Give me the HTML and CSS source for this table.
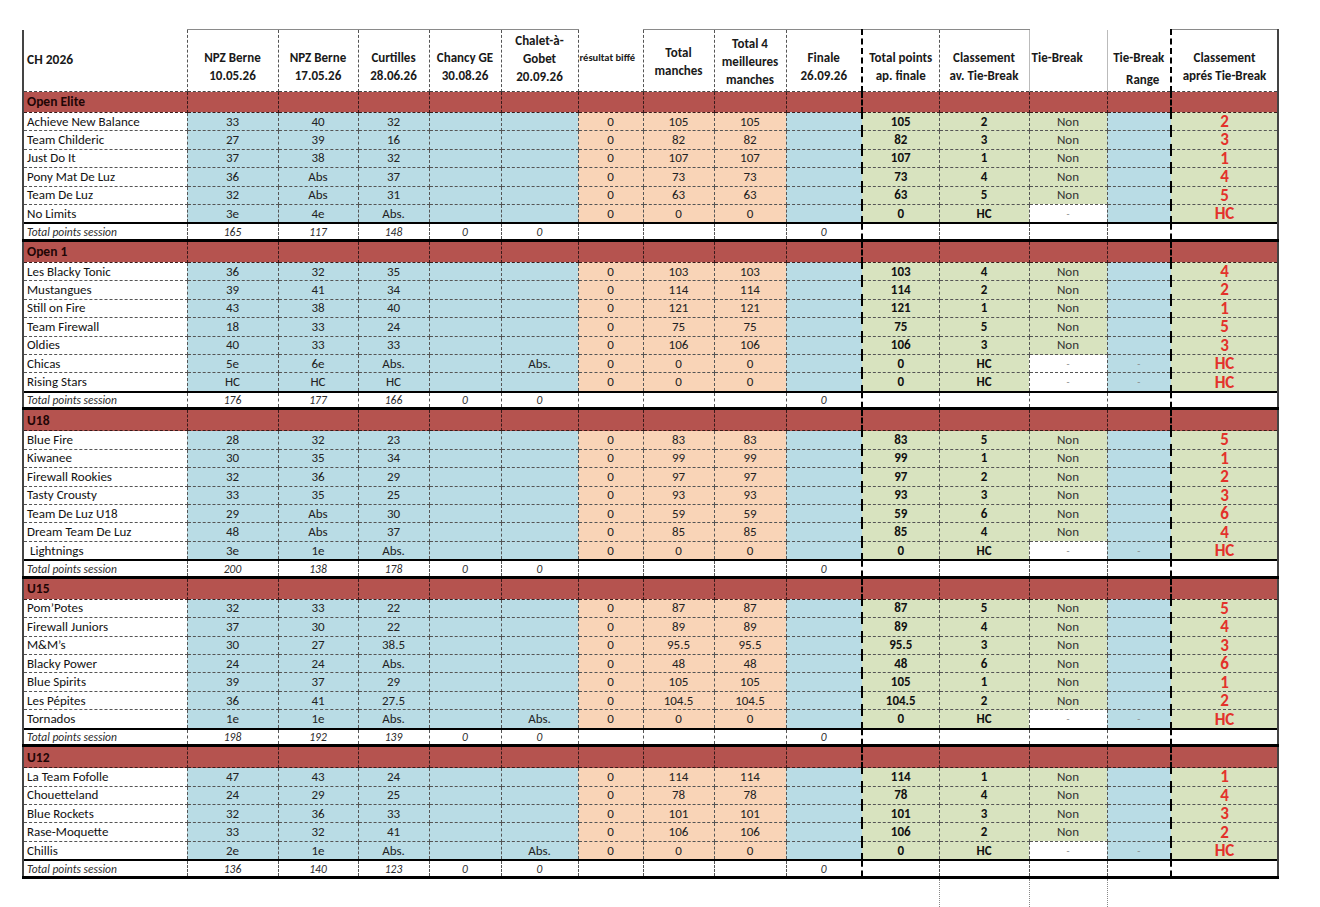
FILE: index.html
```html
<!DOCTYPE html>
<html lang="fr">
<head>
<meta charset="utf-8">
<title>CH 2026</title>
<link rel="stylesheet" href="styles.css">
</head>
<body>
<table class="sheet">
<colgroup>
<col class="c-name"><col class="c-npz1"><col class="c-npz2"><col class="c-cur"><col class="c-cha"><col class="c-chg"><col class="c-bif"><col class="c-tm"><col class="c-t4"><col class="c-fin"><col class="c-tp"><col class="c-cav"><col class="c-tb"><col class="c-tbr"><col class="c-cap">
</colgroup>
<thead>
<tr class="head">
<th class="h-title">CH 2026</th>
<th class="h-low">NPZ Berne<br>10.05.26</th>
<th class="h-low">NPZ Berne<br>17.05.26</th>
<th class="h-low">Curtilles<br>28.06.26</th>
<th class="h-low">Chancy GE<br>30.08.26</th>
<th class="h-three">Chalet-à-<br>Gobet<br>20.09.26</th>
<th class="h-bif">résultat biffé</th>
<th class="h-mid">Total<br>manches</th>
<th class="h-three2">Total 4<br>meilleures<br>manches</th>
<th class="h-low">Finale<br>26.09.26</th>
<th class="h-low">Total points<br>ap. finale</th>
<th class="h-low">Classement<br>av. Tie-Break</th>
<th class="h-tb">Tie-Break</th>
<th class="h-tbr">Tie-Break<br><span class="range">Range</span></th>
<th class="h-low">Classement<br>aprés Tie-Break</th>
</tr>
</thead>
<tbody>
<tr class="sec"><td>Open Elite</td><td></td><td></td><td></td><td></td><td></td><td></td><td></td><td></td><td></td><td></td><td></td><td></td><td></td><td></td></tr>
<tr><td>Achieve New Balance</td><td>33</td><td>40</td><td>32</td><td></td><td></td><td>0</td><td>105</td><td>105</td><td></td><td>105</td><td>2</td><td>Non</td><td></td><td>2</td></tr>
<tr><td>Team Childeric</td><td>27</td><td>39</td><td>16</td><td></td><td></td><td>0</td><td>82</td><td>82</td><td></td><td>82</td><td>3</td><td>Non</td><td></td><td>3</td></tr>
<tr><td>Just Do It</td><td>37</td><td>38</td><td>32</td><td></td><td></td><td>0</td><td>107</td><td>107</td><td></td><td>107</td><td>1</td><td>Non</td><td></td><td>1</td></tr>
<tr><td>Pony Mat De Luz</td><td>36</td><td>Abs</td><td>37</td><td></td><td></td><td>0</td><td>73</td><td>73</td><td></td><td>73</td><td>4</td><td>Non</td><td></td><td>4</td></tr>
<tr><td>Team De Luz</td><td>32</td><td>Abs</td><td>31</td><td></td><td></td><td>0</td><td>63</td><td>63</td><td></td><td>63</td><td>5</td><td>Non</td><td></td><td>5</td></tr>
<tr class="out"><td>No Limits</td><td>3e</td><td>4e</td><td>Abs.</td><td></td><td></td><td>0</td><td>0</td><td>0</td><td></td><td>0</td><td>HC</td><td class="w">-</td><td></td><td>HC</td></tr>
<tr class="tot"><td>Total points session</td><td>165</td><td>117</td><td>148</td><td>0</td><td>0</td><td></td><td></td><td></td><td>0</td><td></td><td></td><td></td><td></td><td></td></tr>

<tr class="sec"><td>Open 1</td><td></td><td></td><td></td><td></td><td></td><td></td><td></td><td></td><td></td><td></td><td></td><td></td><td></td><td></td></tr>
<tr><td>Les Blacky Tonic</td><td>36</td><td>32</td><td>35</td><td></td><td></td><td>0</td><td>103</td><td>103</td><td></td><td>103</td><td>4</td><td>Non</td><td></td><td>4</td></tr>
<tr><td>Mustangues</td><td>39</td><td>41</td><td>34</td><td></td><td></td><td>0</td><td>114</td><td>114</td><td></td><td>114</td><td>2</td><td>Non</td><td></td><td>2</td></tr>
<tr><td>Still on Fire</td><td>43</td><td>38</td><td>40</td><td></td><td></td><td>0</td><td>121</td><td>121</td><td></td><td>121</td><td>1</td><td>Non</td><td></td><td>1</td></tr>
<tr><td>Team Firewall</td><td>18</td><td>33</td><td>24</td><td></td><td></td><td>0</td><td>75</td><td>75</td><td></td><td>75</td><td>5</td><td>Non</td><td></td><td>5</td></tr>
<tr><td>Oldies</td><td>40</td><td>33</td><td>33</td><td></td><td></td><td>0</td><td>106</td><td>106</td><td></td><td>106</td><td>3</td><td>Non</td><td></td><td>3</td></tr>
<tr class="out"><td>Chicas</td><td>5e</td><td>6e</td><td>Abs.</td><td></td><td>Abs.</td><td>0</td><td>0</td><td>0</td><td></td><td>0</td><td>HC</td><td class="w">-</td><td class="dash">-</td><td>HC</td></tr>
<tr class="out"><td>Rising Stars</td><td>HC</td><td>HC</td><td>HC</td><td></td><td></td><td>0</td><td>0</td><td>0</td><td></td><td>0</td><td>HC</td><td class="w">-</td><td class="dash">-</td><td>HC</td></tr>
<tr class="tot"><td>Total points session</td><td>176</td><td>177</td><td>166</td><td>0</td><td>0</td><td></td><td></td><td></td><td>0</td><td></td><td></td><td></td><td></td><td></td></tr>

<tr class="sec"><td>U18</td><td></td><td></td><td></td><td></td><td></td><td></td><td></td><td></td><td></td><td></td><td></td><td></td><td></td><td></td></tr>
<tr><td>Blue Fire</td><td>28</td><td>32</td><td>23</td><td></td><td></td><td>0</td><td>83</td><td>83</td><td></td><td>83</td><td>5</td><td>Non</td><td></td><td>5</td></tr>
<tr><td>Kiwanee</td><td>30</td><td>35</td><td>34</td><td></td><td></td><td>0</td><td>99</td><td>99</td><td></td><td>99</td><td>1</td><td>Non</td><td></td><td>1</td></tr>
<tr><td>Firewall Rookies</td><td>32</td><td>36</td><td>29</td><td></td><td></td><td>0</td><td>97</td><td>97</td><td></td><td>97</td><td>2</td><td>Non</td><td></td><td>2</td></tr>
<tr><td>Tasty Crousty</td><td>33</td><td>35</td><td>25</td><td></td><td></td><td>0</td><td>93</td><td>93</td><td></td><td>93</td><td>3</td><td>Non</td><td></td><td>3</td></tr>
<tr><td>Team De Luz U18</td><td>29</td><td>Abs</td><td>30</td><td></td><td></td><td>0</td><td>59</td><td>59</td><td></td><td>59</td><td>6</td><td>Non</td><td></td><td>6</td></tr>
<tr><td>Dream Team De Luz</td><td>48</td><td>Abs</td><td>37</td><td></td><td></td><td>0</td><td>85</td><td>85</td><td></td><td>85</td><td>4</td><td>Non</td><td></td><td>4</td></tr>
<tr class="out"><td class="ind">Lightnings</td><td>3e</td><td>1e</td><td>Abs.</td><td></td><td></td><td>0</td><td>0</td><td>0</td><td></td><td>0</td><td>HC</td><td class="w">-</td><td class="dash">-</td><td>HC</td></tr>
<tr class="tot"><td>Total points session</td><td>200</td><td>138</td><td>178</td><td>0</td><td>0</td><td></td><td></td><td></td><td>0</td><td></td><td></td><td></td><td></td><td></td></tr>

<tr class="sec"><td>U15</td><td></td><td></td><td></td><td></td><td></td><td></td><td></td><td></td><td></td><td></td><td></td><td></td><td></td><td></td></tr>
<tr><td>Pom’Potes</td><td>32</td><td>33</td><td>22</td><td></td><td></td><td>0</td><td>87</td><td>87</td><td></td><td>87</td><td>5</td><td>Non</td><td></td><td>5</td></tr>
<tr><td>Firewall Juniors</td><td>37</td><td>30</td><td>22</td><td></td><td></td><td>0</td><td>89</td><td>89</td><td></td><td>89</td><td>4</td><td>Non</td><td></td><td>4</td></tr>
<tr><td>M&amp;M’s</td><td>30</td><td>27</td><td>38.5</td><td></td><td></td><td>0</td><td>95.5</td><td>95.5</td><td></td><td>95.5</td><td>3</td><td>Non</td><td></td><td>3</td></tr>
<tr><td>Blacky Power</td><td>24</td><td>24</td><td>Abs.</td><td></td><td></td><td>0</td><td>48</td><td>48</td><td></td><td>48</td><td>6</td><td>Non</td><td></td><td>6</td></tr>
<tr><td>Blue Spirits</td><td>39</td><td>37</td><td>29</td><td></td><td></td><td>0</td><td>105</td><td>105</td><td></td><td>105</td><td>1</td><td>Non</td><td></td><td>1</td></tr>
<tr><td>Les Pépites</td><td>36</td><td>41</td><td>27.5</td><td></td><td></td><td>0</td><td>104.5</td><td>104.5</td><td></td><td>104.5</td><td>2</td><td>Non</td><td></td><td>2</td></tr>
<tr class="out"><td>Tornados</td><td>1e</td><td>1e</td><td>Abs.</td><td></td><td>Abs.</td><td>0</td><td>0</td><td>0</td><td></td><td>0</td><td>HC</td><td class="w">-</td><td class="dash">-</td><td>HC</td></tr>
<tr class="tot"><td>Total points session</td><td>198</td><td>192</td><td>139</td><td>0</td><td>0</td><td></td><td></td><td></td><td>0</td><td></td><td></td><td></td><td></td><td></td></tr>

<tr class="sec"><td>U12</td><td></td><td></td><td></td><td></td><td></td><td></td><td></td><td></td><td></td><td></td><td></td><td></td><td></td><td></td></tr>
<tr><td>La Team Fofolle</td><td>47</td><td>43</td><td>24</td><td></td><td></td><td>0</td><td>114</td><td>114</td><td></td><td>114</td><td>1</td><td>Non</td><td></td><td>1</td></tr>
<tr><td>Chouetteland</td><td>24</td><td>29</td><td>25</td><td></td><td></td><td>0</td><td>78</td><td>78</td><td></td><td>78</td><td>4</td><td>Non</td><td></td><td>4</td></tr>
<tr><td>Blue Rockets</td><td>32</td><td>36</td><td>33</td><td></td><td></td><td>0</td><td>101</td><td>101</td><td></td><td>101</td><td>3</td><td>Non</td><td></td><td>3</td></tr>
<tr><td>Rase-Moquette</td><td>33</td><td>32</td><td>41</td><td></td><td></td><td>0</td><td>106</td><td>106</td><td></td><td>106</td><td>2</td><td>Non</td><td></td><td>2</td></tr>
<tr class="out"><td>Chillis</td><td>2e</td><td>1e</td><td>Abs.</td><td></td><td>Abs.</td><td>0</td><td>0</td><td>0</td><td></td><td>0</td><td>HC</td><td class="w">-</td><td class="dash">-</td><td>HC</td></tr>
<tr class="tot"><td>Total points session</td><td>136</td><td>140</td><td>123</td><td>0</td><td>0</td><td></td><td></td><td></td><td>0</td><td></td><td></td><td></td><td></td><td></td></tr>
<tr class="tail"><td></td><td></td><td></td><td></td><td></td><td></td><td></td><td></td><td></td><td></td><td></td><td></td><td></td><td></td><td></td></tr>
</tbody>
</table>
</body>
</html>
```
FILE: styles.css
```css
html, body {
  margin: 0;
  padding: 0;
  background: #ffffff;
}
body {
  font-family: "Carlito", "Liberation Sans Narrow", "Open Sans", sans-serif;
  color: #1c1c1c;
  overflow: hidden;
}
.sheet {
  border-collapse: collapse;
  table-layout: fixed;
  width: 1256px;
  margin: 29px 0 0 22px;
}
.c-name { width: 164px; }
.c-npz1 { width: 91px; }
.c-npz2 { width: 80px; }
.c-cur { width: 71px; }
.c-cha { width: 72px; }
.c-chg { width: 77px; }
.c-bif { width: 65px; }
.c-tm { width: 71px; }
.c-t4 { width: 72px; }
.c-fin { width: 76px; }
.c-tp { width: 77px; }
.c-cav { width: 90px; }
.c-tb { width: 78px; }
.c-tbr { width: 64px; }
.c-cap { width: 107px; }

/* ---------- header ---------- */
.head { height: 62px; }
.head th {
  padding: 0;
  font-size: 13px;
  font-weight: bold;
  line-height: 18px;
  text-align: center;
  vertical-align: middle;
  background: #fff;
  color: #1a1a1a;
  border-top: 1px solid #8a8a8a;
  border-right: 1px dashed #555;
  border-bottom: 1px dashed #444;
  white-space: nowrap;
}
.head th.h-title {
  text-align: left;
  padding-left: 3px;
  border-top: none;
  border-left: 2px solid #444;
  font-size: 13.5px;
}
.head th.h-low { padding-top: 12px; }
.head th.h-three { padding-bottom: 4px; }
.head th.h-three2 { padding-top: 2px; }
.head th.h-mid { padding-top: 2px; }
.head th.h-bif {
  border-top: none;
  font-size: 10.5px;
  text-align: left;
  vertical-align: top;
  padding: 22px 0 0 1px;
  line-height: 12px;
}
.head th.h-tb {
  border-top: none;
  text-align: left;
  vertical-align: top;
  padding: 19px 0 0 2px;
  border-left: 1px solid #bbb;
  border-right: 1px solid #bbb;
}
.head th.h-tbr {
  border-top: none;
  vertical-align: top;
  padding-top: 17px;
  line-height: 22px;
}
.head th.h-tbr .range { padding-left: 8px; }
.head th:nth-child(11) { border-left: 2px dashed #000; }
.head th:nth-child(15) { border-left: 2px dashed #000; border-right: 2px solid #444; }

/* ---------- body cells ---------- */
tbody td {
  height: 17.45px;
  padding: 0;
  font-size: 13px;
  line-height: 14px;
  text-align: center;
  vertical-align: middle;
  color: #222;
  border-right: 1px dashed #555;
  border-bottom: 1px dashed #555;
  white-space: nowrap;
}
tbody td:first-child {
  text-align: left;
  padding-left: 3px;
  border-left: 2px solid #444;
  background: #fff;
  color: #111;
}
tbody td:last-child { border-right: 2px solid #444; }
tbody td:nth-child(11) { border-left: 2px dashed #000; }
tbody td:nth-child(15) { border-left: 2px dashed #000; }

/* column fills for team rows */
tbody tr td:nth-child(2),
tbody tr td:nth-child(3),
tbody tr td:nth-child(4),
tbody tr td:nth-child(5),
tbody tr td:nth-child(6),
tbody tr td:nth-child(10),
tbody tr td:nth-child(14) { background: #b9dce5; }
tbody tr td:nth-child(7),
tbody tr td:nth-child(8),
tbody tr td:nth-child(9) { background: #f9d4b7; }
tbody tr td:nth-child(11),
tbody tr td:nth-child(12),
tbody tr td:nth-child(13),
tbody tr td:nth-child(15) { background: #d8e3bf; }

tbody td:nth-child(11),
tbody td:nth-child(12) { font-weight: bold; color: #111; }
tbody td:nth-child(13) { color: #333; }
tbody td:nth-child(15) {
  color: #e3322b;
  font-weight: bold;
  font-size: 17px;
  line-height: 17px;
}
tbody tr td.w { background: #fff; color: #888; font-size: 10px; }
tbody tr td.dash { color: #888; font-size: 10px; }
tbody tr td.ind { padding-left: 6px; }

/* section band */
tbody tr.sec td {
  height: 18.8px;
  background: #b5534f;
  border-right: 1px dashed #3a1a1a;
  border-bottom: 1px dashed #3a1a1a;
}
tbody tr.sec td:first-child {
  font-weight: bold;
  font-size: 13.5px;
  color: #1f0606;
  padding-top: 1px;
}
tbody tr.sec td:nth-child(11),
tbody tr.sec td:nth-child(15) { border-left: 2px dashed #000; }
tbody tr.sec td:last-child { border-right: 2px solid #444; }

/* totals */
tbody tr.tot td {
  height: 14.6px;
  background: #fff;
  font-style: italic;
  font-size: 11.5px;
  color: #2a2a2a;
  font-weight: normal;
  border-top: 2px solid #000;
  border-bottom: 3px solid #000;
}

/* guide lines below the sheet */
tbody tr.tail td {
  height: 28px;
  background: transparent;
  border: none;
}
tbody tr.tail td:nth-child(11),
tbody tr.tail td:nth-child(15) { border-left: none; }
tbody tr.tail td:nth-child(12),
tbody tr.tail td:nth-child(13),
tbody tr.tail td:nth-child(14) { border-left: 1px dotted #888; }
tbody tr.tail td:first-child,
tbody tr.tail td:last-child { border-left: none; border-right: none; }
tbody tr.tail td:nth-child(11) { border-right: none; }
```
